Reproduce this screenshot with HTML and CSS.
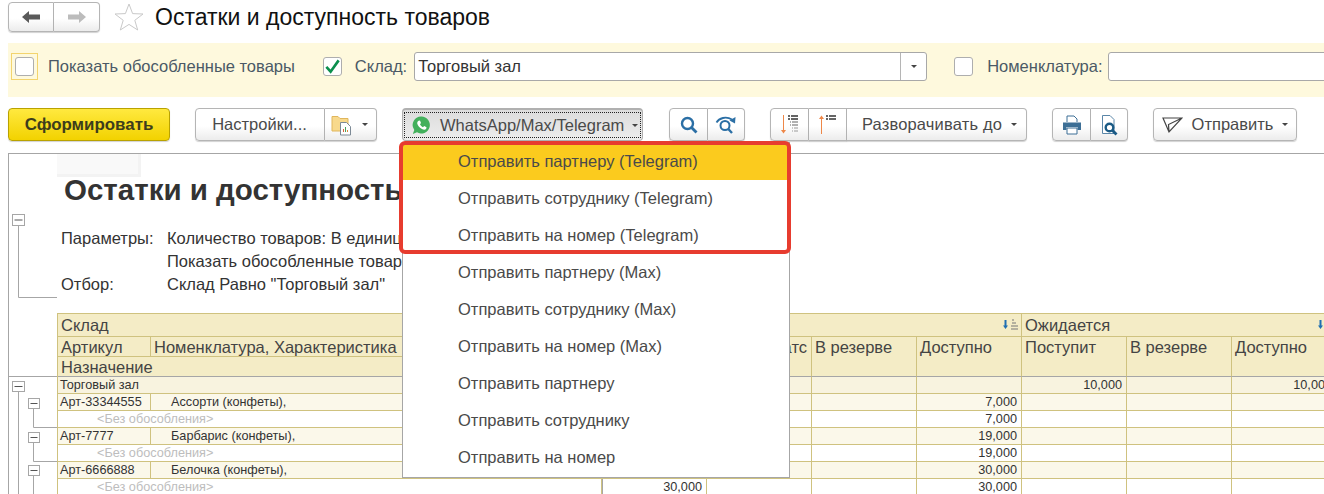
FILE: index.html
```html
<!DOCTYPE html>
<html lang="ru">
<head>
    <meta charset="UTF-8">
    <title>Остатки и доступность товаров</title>
    <link rel="stylesheet" href="styles.css">
</head>
<body>
    <div class="header">
        <div class="btn-group nav-group">
            <button class="btn nav-btn">
                <svg width="18" height="12" viewBox="0 0 18 12"><path d="M0 6 7 0V3.500H18V8.500H7V12Z" fill="#5a5a5a"/></svg>
            </button>
            <button class="btn nav-btn">
                <svg width="18" height="12" viewBox="0 0 18 12"><path d="M18 6 11 0V3.500H0V8.500H11V12Z" fill="#bcbcbc"/></svg>
            </button>
        </div>
        <svg class="star" width="30" height="28" viewBox="0 0 30 28"><path d="M15 1 18.600 10.600 29 11 20.800 17.300 23.700 27 15 21.400 6.300 27 9.200 17.300 1 11 11.400 10.600Z" fill="#fff" stroke="#c9c9c9"/></svg>
        <h1>Остатки и доступность товаров</h1>
    </div>

    <div class="filter-bar">
        <span class="check-focus"><span class="check"></span></span>
        <label class="filter-label first-label">Показать обособленные товары</label>
        <span class="check check-on">
            <svg width="18" height="17" viewBox="0 0 18 17"><path d="M2.500 9 7 14 15.500 2" fill="none" stroke="#0b8f4d" stroke-width="2.800"/></svg>
        </span>
        <label class="filter-label sklad-label">Склад:</label>
        <div class="field sklad-field">
            <span class="field-text">Торговый зал</span>
            <span class="field-drop"><i class="caret"></i></span>
        </div>
        <span class="check check-third"></span>
        <label class="filter-label nom-label">Номенклатура:</label>
        <div class="field nom-field"></div>
    </div>

    <div class="command-bar">
        <button class="btn btn-primary">Сформировать</button>

        <div class="btn-group settings-group">
            <button class="btn settings-btn">Настройки...</button>
            <button class="btn settings-icon">
                <svg width="21" height="22" viewBox="0 0 21 22">
                    <path d="M1 2.500H7L9 4.500H17V17H1Z" fill="#f8d98c" stroke="#e0b65c"/>
                    <path d="M9.500 8.500H15.500L19.500 12.500V21H9.500Z" fill="#fff" stroke="#7d8a96"/>
                    <path d="M12.500 18V15" stroke="#d9603a"/>
                    <path d="M14.500 18V13" stroke="#4aa05a"/>
                    <path d="M16.500 18V16" stroke="#d88a3a"/>
                </svg>
                <i class="caret"></i>
            </button>
        </div>

        <button class="btn btn-pressed">
            <span class="focus-dots">
                <svg width="19" height="19" viewBox="0 0 19 19">
                    <path d="M9.500 .5A8.500 8.500 0 1 1 5 16.300L.8 18 2.300 14A8.500 8.500 0 0 1 9.500 .5Z" fill="#43b05c"/>
                    <path d="M6.600 4.700 8 4.500 9 6.900 8 8.200C8.700 9.700 9.700 10.600 11 11.200L12.200 10 14.500 11.200 14.200 12.700C13.400 14 11.700 14 10 13.100 7.800 12 5.800 9.800 5.300 7.800 5 6.500 5.600 5.400 6.600 4.700Z" fill="#fff"/>
                </svg>
                <span class="pressed-text">WhatsApp/Max/Telegram</span>
                <i class="caret"></i>
            </span>
        </button>

        <div class="btn-group search-group">
            <button class="btn icon-btn">
                <svg width="20" height="20" viewBox="0 0 20 20"><circle cx="8.500" cy="8.500" r="5.500" fill="none" stroke="#2b6fa5" stroke-width="2.400"/><path d="M12.500 12.500 17.500 17.500" stroke="#2b6fa5" stroke-width="2.800"/></svg>
            </button>
            <button class="btn icon-btn">
                <svg width="22" height="20" viewBox="0 0 22 20"><path d="M1.500 7.500C4 3 11 1 17 4.500" fill="none" stroke="#2b6fa5" stroke-width="1.800"/><path d="M20.500 2 20 8.500 14.500 5.500Z" fill="#2b6fa5"/><circle cx="10" cy="10.500" r="4.500" fill="none" stroke="#2b6fa5" stroke-width="2"/><path d="M13.300 14 17 18" stroke="#2b6fa5" stroke-width="2.400"/></svg>
            </button>
        </div>

        <div class="btn-group sort-group">
            <button class="btn icon-btn">
                <svg width="20" height="20" viewBox="0 0 20 20"><path d="M3.500 0V16" stroke="#ee8748"/><path d="M1 15H6L3.500 18.500Z" fill="#ee8748"/><path d="M8 1H10M11 1H18M8 4H10M11 4H18" stroke="#333" stroke-width="1.500"/><path d="M10 7H11M12 7H18M10 10H11M12 10H18" stroke="#666" stroke-width="1.200"/><path d="M12 13H13M14 13H18M12 16H13M14 16H18" stroke="#999" stroke-width="1.200"/></svg>
            </button>
            <button class="btn icon-btn">
                <svg width="20" height="20" viewBox="0 0 20 20"><path d="M3.500 3V19" stroke="#ee8748"/><path d="M1 4H6L3.500 .5Z" fill="#ee8748"/><path d="M8 1H10M11 1H18M8 4H10M11 4H18" stroke="#333" stroke-width="1.500"/></svg>
            </button>
            <button class="btn expand-btn"><span class="expand-text">Разворачивать до</span><i class="caret"></i></button>
        </div>

        <div class="btn-group print-group">
            <button class="btn icon-btn">
                <svg width="20" height="20" viewBox="0 0 20 20"><path d="M5 7V1H12L15 4V7" fill="#fff" stroke="#3d6f96"/><path d="M1 7.500H19V15H15.500V12H4.500V15H1Z" fill="#3d6f96"/><path d="M5 13H15V19H5Z" fill="#fff" stroke="#3d6f96"/></svg>
            </button>
            <button class="btn icon-btn">
                <svg width="20" height="22" viewBox="0 0 20 22"><path d="M3.500 1.500H11L15 5.500V19.500H3.500Z" fill="#fff" stroke="#5a86a8"/><circle cx="10.500" cy="13.500" r="3.800" fill="#fff" stroke="#1a5a85" stroke-width="2.400"/><path d="M13.500 16.500 17.500 20.500" stroke="#1a5a85" stroke-width="2.800"/></svg>
            </button>
        </div>

        <button class="btn send-btn">
            <svg width="21" height="18" viewBox="0 0 21 18"><path d="M1 2H20L7 16ZM20 2 6.500 8.500 7 16" fill="none" stroke="#444" stroke-width="1.200"/></svg>
            <span class="send-text">Отправить</span>
            <i class="caret"></i>
        </button>
    </div>

    <div class="report">
        <svg class="tree" width="48" height="340" viewBox="9 154 48 340">
            <path class="tree-line" d="M18.500 226V297.500H57M9 376.500H57M18.500 392V494M33.500 408V427.500H57M33.500 442V461.500H57M33.500 476V494"/>
            <g class="tree-box">
                <rect x="12.500" y="214.500" width="12" height="11"/><path d="M14.500 220H22.500"/>
                <rect x="12.500" y="381.500" width="12" height="10"/><path d="M14.500 386.500H22.500"/>
                <rect x="28.500" y="398.500" width="11" height="10"/><path d="M30.500 403.500H37.500"/>
                <rect x="28.500" y="432.500" width="11" height="10"/><path d="M30.500 437.500H37.500"/>
                <rect x="28.500" y="465.500" width="11" height="10"/><path d="M30.500 470.500H37.500"/>
            </g>
        </svg>

        <div class="report-body">
            <div class="report-mark"></div>
            <h2>Остатки и доступность товаров</h2>
            <div class="params">
                <span>Параметры:</span><span>Количество товаров: В единицах хранения</span>
                <span></span><span>Показать обособленные товары: Да</span>
                <span>Отбор:</span><span>Склад Равно "Торговый зал"</span>
            </div>

            <table class="grid">
                <colgroup>
                    <col class="col-art"><col class="col-name"><col class="col-extra">
                    <col class="col-num"><col class="col-num"><col class="col-num"><col class="col-num">
                    <col class="col-num"><col class="col-num"><col class="col-num">
                </colgroup>
                <thead>
                    <tr class="head-top">
                        <th colspan="3">Склад</th>
                        <th colspan="4"><svg class="sort-mark" width="17" height="11" viewBox="0 0 17 11"><path d="M3.500 1V7" stroke="#1f6fb2" stroke-width="2"/><path d="M1 6.500H6L3.500 10Z" fill="#1f6fb2"/><path d="M10 1H12M10 4H14M9 7H16M9 10H16" stroke="#777"/></svg></th>
                        <th colspan="3">Ожидается<svg class="sort-mark" width="17" height="11" viewBox="0 0 17 11"><path d="M3.500 1V7" stroke="#1f6fb2" stroke-width="2"/><path d="M1 6.500H6L3.500 10Z" fill="#1f6fb2"/></svg></th>
                    </tr>
                    <tr class="head-mid">
                        <th>Артикул</th>
                        <th colspan="2">Номенклатура, Характеристика</th>
                        <th rowspan="2"></th>
                        <th rowspan="2" class="tail-head">Остатс</th>
                        <th rowspan="2">В резерве</th>
                        <th rowspan="2">Доступно</th>
                        <th rowspan="2">Поступит</th>
                        <th rowspan="2">В резерве</th>
                        <th rowspan="2">Доступно</th>
                    </tr>
                    <tr class="head-low">
                        <th colspan="3">Назначение</th>
                    </tr>
                </thead>
                <tbody>
                    <tr class="row-group">
                        <td colspan="3">Торговый зал</td>
                        <td></td><td></td><td></td><td></td>
                        <td class="num">10,000</td><td></td><td class="num">10,000</td>
                    </tr>
                    <tr class="row-item">
                        <td>Арт-33344555</td><td colspan="2" class="item-name">Ассорти (конфеты),</td>
                        <td></td><td></td><td></td><td class="num">7,000</td><td></td><td></td><td></td>
                    </tr>
                    <tr class="row-sub">
                        <td colspan="3" class="no-split">&lt;Без обособления&gt;</td>
                        <td></td><td></td><td></td><td class="num">7,000</td><td></td><td></td><td></td>
                    </tr>
                    <tr class="row-item">
                        <td>Арт-7777</td><td colspan="2" class="item-name">Барбарис (конфеты),</td>
                        <td></td><td></td><td></td><td class="num">19,000</td><td></td><td></td><td></td>
                    </tr>
                    <tr class="row-sub">
                        <td colspan="3" class="no-split">&lt;Без обособления&gt;</td>
                        <td></td><td></td><td></td><td class="num">19,000</td><td></td><td></td><td></td>
                    </tr>
                    <tr class="row-item">
                        <td>Арт-6666888</td><td class="item-name">Белочка (конфеты),</td><td></td>
                        <td></td><td></td><td></td><td class="num">30,000</td><td></td><td></td><td></td>
                    </tr>
                    <tr class="row-sub row-last">
                        <td colspan="3" class="no-split">&lt;Без обособления&gt;</td>
                        <td class="num">30,000</td><td></td><td></td><td class="num">30,000</td><td></td><td></td><td></td>
                    </tr>
                </tbody>
            </table>
        </div>
    </div>

    <ul class="menu">
        <li class="active">Отправить партнеру (Telegram)</li>
        <li>Отправить сотруднику (Telegram)</li>
        <li>Отправить на номер (Telegram)</li>
        <li>Отправить партнеру (Max)</li>
        <li>Отправить сотруднику (Max)</li>
        <li>Отправить на номер (Max)</li>
        <li>Отправить партнеру</li>
        <li>Отправить сотруднику</li>
        <li>Отправить на номер</li>
    </ul>
    <div class="red-frame"></div>
</body>
</html>
```

FILE: styles.css
```css
* {
    box-sizing: border-box;
}
html, body {
    margin: 0;
    width: 1324px;
    height: 494px;
    overflow: hidden;
}
body {
    position: relative;
    background: #fff;
    font-family: "Liberation Sans", Arial, sans-serif;
    font-size: 16.5px;
    color: #4a4a4a;
}

/* header */
.header {
    display: flex;
    align-items: center;
    height: 34px;
    padding: 2px 0 2px 8px;
}
.header h1 {
    margin: 0 0 0 11px;
    font-size: 23px;
    font-weight: normal;
    color: #111;
    white-space: nowrap;
}
.star {
    margin-left: 14px;
}

/* buttons */
.btn {
    display: flex;
    align-items: center;
    justify-content: center;
    height: 33px;
    margin: 0;
    padding: 0;
    border: 1px solid #b5b5b5;
    border-radius: 4px;
    background: linear-gradient(#fff 55%, #ececec);
    box-shadow: 0 1px 1px rgba(0, 0, 0, 0.18);
    font-family: inherit;
    font-size: 16.5px;
    color: #4a4a4a;
    white-space: nowrap;
}
.btn-group {
    display: flex;
}
.btn-group .btn {
    border-radius: 0;
    border-left-width: 0;
}
.btn-group .btn:first-child {
    border-left-width: 1px;
    border-radius: 4px 0 0 4px;
}
.btn-group .btn:last-child {
    border-radius: 0 4px 4px 0;
}
.nav-btn {
    height: 30px;
    width: 46px;
}
.caret {
    display: inline-block;
    flex: none;
    width: 0;
    height: 0;
    border-left: 3px solid transparent;
    border-right: 3px solid transparent;
    border-top: 3px solid #444;
}

/* filter bar */
.filter-bar {
    display: flex;
    align-items: center;
    height: 54px;
    margin: 9px 0 0 8px;
    padding: 0 0 7px 3px;
    background: #fef9dd;
    white-space: nowrap;
}
.check-focus {
    display: flex;
    flex: none;
    align-items: center;
    justify-content: center;
    width: 27px;
    height: 27px;
    border: 1px solid #f3d46e;
}
.check {
    display: flex;
    flex: none;
    align-items: center;
    justify-content: center;
    width: 19px;
    height: 19px;
    border: 1px solid #aeaeae;
    border-radius: 3px;
    background: #fff;
}
.check-on {
    margin-left: 28px;
}
.check-third {
    margin-left: 27px;
}
.filter-label {
    color: #4b5966;
}
.first-label {
    margin-left: 10px;
}
.sklad-label {
    margin-left: 13px;
}
.nom-label {
    margin-left: 14px;
}
.field {
    display: flex;
    flex: none;
    align-items: center;
    height: 29px;
    border: 1px solid #a8a8a8;
    border-radius: 3px;
    background: #fff;
    color: #333;
}
.sklad-field {
    width: 513px;
    margin-left: 7px;
}
.field-text {
    flex: 1;
    padding-left: 3px;
}
.field-drop {
    display: flex;
    align-items: center;
    justify-content: center;
    width: 26px;
    height: 100%;
    border-left: 1px solid #b5b5b5;
}
.nom-field {
    width: 240px;
    margin-left: 5px;
}

/* command bar */
.command-bar {
    display: flex;
    height: 33px;
    margin-top: 11px;
    padding-left: 8px;
}
.btn-primary {
    width: 162px;
    border-color: #b9a200;
    background: linear-gradient(#ffe93f, #f2d200);
    font-size: 16.9px;
    font-weight: bold;
    color: #3d3d1c;
}
.settings-group {
    margin-left: 25px;
}
.settings-btn {
    width: 130px;
    padding-right: 1px;
}
.settings-icon {
    justify-content: flex-start;
    gap: 10px;
    width: 52px;
    padding-left: 6px;
}
.btn-pressed {
    width: 241px;
    margin-left: 25px;
    border-color: #b0b0b0;
    border-top: 2px solid #b0b0b0;
    background: linear-gradient(#dcdcdc, #ededed);
    box-shadow: none;
}
.focus-dots {
    display: flex;
    align-items: center;
    width: 237px;
    height: 26px;
    padding-left: 7px;
    border: 1px dotted #222;
}
.pressed-text {
    margin: 0 8px 0 9px;
}
.search-group {
    margin-left: 26px;
}
.icon-btn {
    width: 38px;
}
.icon-btn:first-child {
    width: 39px;
}
.search-group .icon-btn:last-child, .print-group .icon-btn:last-child {
    width: 37px;
}
.sort-group {
    margin-left: 25px;
}
.expand-btn {
    gap: 9px;
    width: 180px;
    padding-left: 6px;
}
.expand-text {
    letter-spacing: 0.17px;
}
.print-group {
    margin-left: 25px;
}
.send-btn {
    gap: 9px;
    width: 144px;
    margin-left: 25px;
}

/* report */
.report {
    display: flex;
    margin: 12px 0 0 8px;
    border-top: 1px solid #a6a6a6;
    border-left: 1px solid #a6a6a6;
}
.tree {
    flex: none;
}
.tree-line {
    fill: none;
    stroke: #a6a6a6;
}
.tree-box rect {
    fill: #fff;
    stroke: #a6a6a6;
}
.tree-box path {
    stroke: #555;
}
.report-body {
    flex: none;
    width: 1280px;
}
.report-mark {
    width: 84px;
    height: 23px;
    border-right: 3px solid #f3f3f3;
    border-bottom: 3px solid #f3f3f3;
    background: #f9f9f9;
}
.report-body h2 {
    margin: 0;
    padding: 0 0 0 7px;
    height: 26px;
    line-height: 26px;
    font-size: 29.500px;
    color: #333;
    white-space: nowrap;
}
.params {
    display: grid;
    grid-template-columns: 106px auto;
    grid-auto-rows: 23px;
    height: 110px;
    padding: 24px 0 0 4px;
    line-height: 23px;
    color: #333;
    white-space: nowrap;
}
.grid {
    width: 1280px;
    table-layout: fixed;
    border-collapse: separate;
    border-spacing: 0;
    border-top: 1px solid #cfc27f;
    border-left: 1px solid #cfc27f;
}
.col-art {
    width: 93px;
}
.col-name {
    width: 403px;
}
.col-extra {
    width: 48px;
}
.col-num {
    width: 105px;
}
.grid th, .grid td {
    padding: 0 4px 0 3px;
    border-right: 1px solid #cfc27f;
    border-bottom: 1px solid #cfc27f;
    white-space: nowrap;
    overflow: hidden;
}
.grid th {
    background: #f4ecc6;
    font-weight: normal;
    font-size: 16.5px;
    color: #444;
    text-align: left;
    vertical-align: top;
    line-height: 19px;
}
.head-top th {
    height: 23px;
    padding-top: 2px;
}
.head-mid th, .head-low th {
    height: 20px;
    padding-top: 2px;
    line-height: 17px;
}
.head-low th {
    border-bottom-color: #a6a6a6;
}
.head-mid th[rowspan] {
    border-bottom-color: #a6a6a6;
}
.tail-head {
    padding-right: 11px;
    text-align: right !important;
}
.sort-mark {
    float: right;
    margin: 3px -2px 0 0;
}
.grid td {
    height: 17px;
    padding-left: 2px;
    font-size: 12.7px;
    line-height: 16px;
    color: #333;
}
.row-group td {
    background: #f8f3df;
}
.row-item td {
    background: #fbf8ea;
}
.row-sub td {
    background: #fff;
}
.item-name {
    padding-left: 20px !important;
}
.no-split {
    padding-left: 39px !important;
    color: #bdbdbd !important;
}
.num {
    text-align: right;
}
.row-last .num:nth-child(2) {
    border-left: 1px solid #a6a6a6;
}

/* dropdown */
.menu {
    position: absolute;
    top: 142px;
    left: 402px;
    width: 388px;
    height: 336px;
    margin: 0;
    padding: 0;
    list-style: none;
    border: 1px solid #a6a6a6;
    background: #fff;
}
.menu li {
    height: 37px;
    padding-left: 55px;
    line-height: 36px;
    color: #4a4a4a;
}
.menu .active {
    background: #fbcb1e;
}
.red-frame {
    position: absolute;
    top: 141px;
    left: 399px;
    width: 392px;
    height: 113px;
    border: 4px solid #e73c2f;
    border-radius: 6px;
}
```
